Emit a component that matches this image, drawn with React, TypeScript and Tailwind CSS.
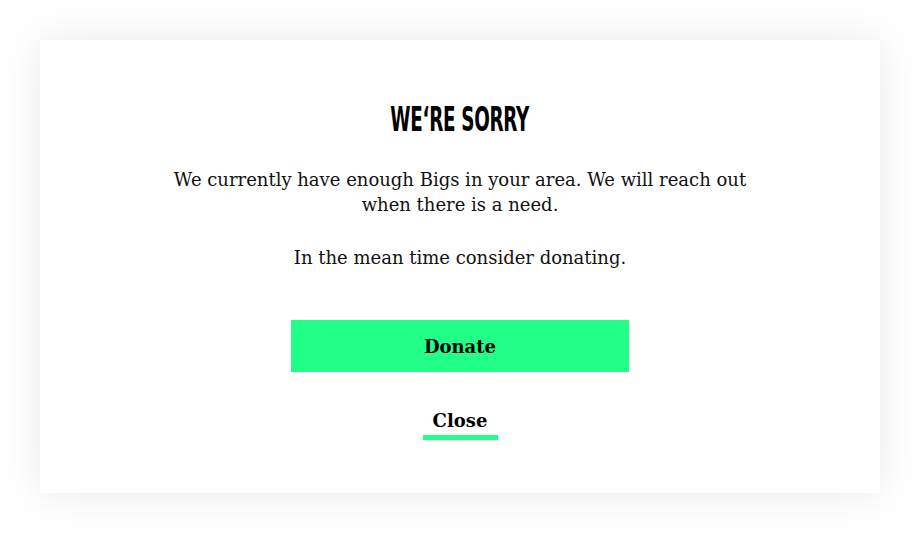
const App = () => {
  return (
    <div className="w-[920px] h-[534px] bg-white p-10">
      <div className="h-[453px] bg-white shadow-[0_0_40px_rgba(0,0,0,0.09)] flex flex-col items-center pt-[62px] font-['DejaVu_Serif',serif] text-[#111]">
        <h2 className="font-['Liberation_Sans_Narrow','DejaVu_Sans_Condensed',sans-serif] font-bold text-[34px] leading-none tracking-[-0.5px] scale-x-[0.6] text-black">
          WE‘RE SORRY
        </h2>
        <p className="mt-[31px] text-[18px] leading-[25px] text-center">
          We currently have enough Bigs in your area. We will reach out
          <br />
          when there is a need.
        </p>
        <p className="mt-[28px] text-[18px] leading-[25px] text-center">
          In the mean time consider donating.
        </p>
        <button className="mt-[50px] w-[338px] h-[52px] bg-[#22ff88] font-bold text-[18px] text-black">
          Donate
        </button>
        <button className="mt-[39px] flex flex-col items-center">
          <span className="text-[18px] leading-[20px] font-bold text-black">Close</span>
          <span className="mt-[4px] w-[75px] h-[5px] bg-[#22ff88]" />
        </button>
      </div>
    </div>
  );
};

export default App;
